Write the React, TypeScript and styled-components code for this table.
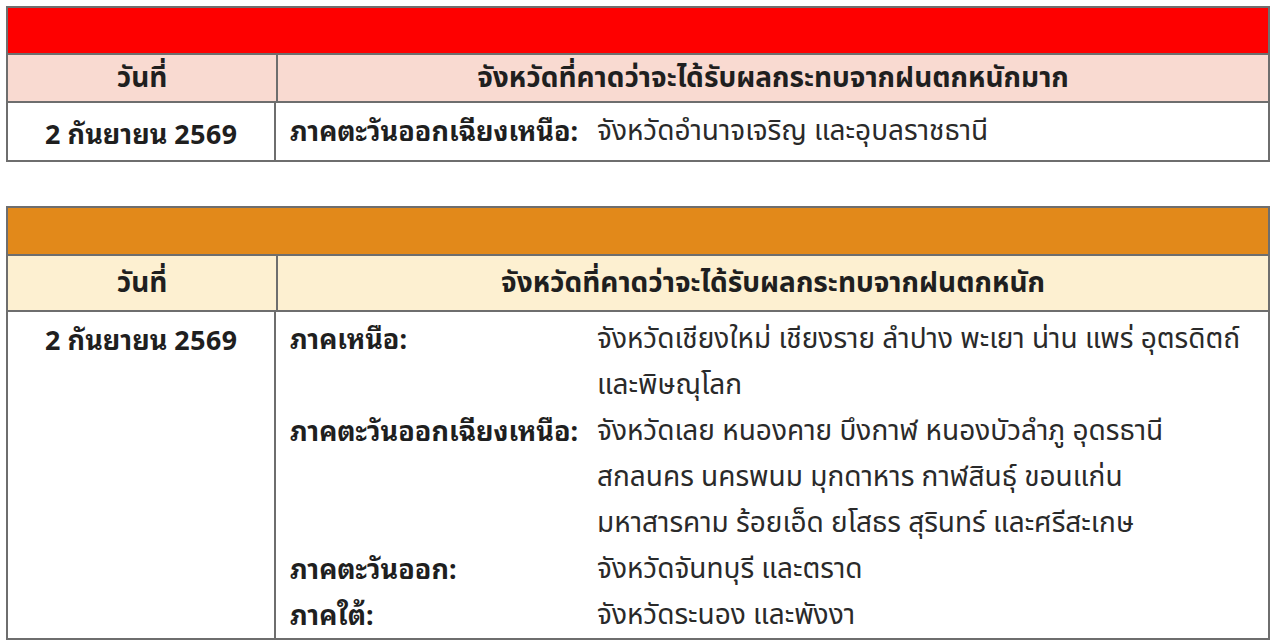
import React from "react"
import styled, { createGlobalStyle } from "styled-components"

const Global = createGlobalStyle`
  html, body {
    margin: 0;
    padding: 0;
    background: #ffffff;
  }
  body {
    font-family: "Noto Sans Thai Looped", "Noto Sans Thai", "Noto Sans", sans-serif;
    color: #1f1f1f;
  }
`

const Page = styled.div`
  display: flex;
  flex-direction: column;
  gap: 44px;
  padding: 6px 10px 0 6px;
  width: 1264px;
`

const Table = styled.div`
  border: 2px solid #6e6e6e;
  display: flex;
  flex-direction: column;
`

const Band = styled.div<{ $color: string; $h: number }>`
  height: ${(p) => p.$h}px;
  background: ${(p) => p.$color};
  border-bottom: 2px solid #6e6e6e;
`

const Row = styled.div<{ $bg?: string; $h?: number }>`
  display: grid;
  grid-template-columns: 268px 1fr;
  background: ${(p) => p.$bg || "#ffffff"};
  ${(p) => (p.$h ? `height: ${p.$h}px;` : "")}
  & + & {
    border-top: 2px solid #6e6e6e;
  }
`

const HeadCell = styled.div`
  display: flex;
  align-items: center;
  justify-content: center;
  font-family: "Noto Sans Thai", "Noto Sans", sans-serif;
  font-weight: 700;
  font-size: 28px;
  & + & {
    border-left: 2px solid #6e6e6e;
  }
`

const DateCell = styled.div<{ $top?: boolean }>`
  display: flex;
  justify-content: center;
  align-items: ${(p) => (p.$top ? "flex-start" : "center")};
  padding-top: ${(p) => (p.$top ? "3px" : "0")};
  font-weight: 700;
  font-size: 27px;
  line-height: 46px;
  border-right: 2px solid #6e6e6e;
`

const Regions = styled.div<{ $top?: boolean }>`
  display: grid;
  grid-template-columns: 307px 1fr;
  align-items: start;
  align-content: ${(p) => (p.$top ? "start" : "center")};
  padding: ${(p) => (p.$top ? "5px 0 0 14px" : "0 0 0 14px")};
  line-height: 46px;
`

const Label = styled.div`
  font-weight: 700;
  font-size: 27px;
  white-space: nowrap;
  margin-top: -3px;
  height: 46px;
`

const Value = styled.div`
  font-family: "Noto Sans Thai", "Noto Sans", sans-serif;
  font-size: 28px;
  white-space: nowrap;
  display: flex;
  flex-direction: column;
  color: #2a2a2a;
`

type Region = { label: string; lines: string[] }

const heavy: Region[] = [
  { label: "ภาคตะวันออกเฉียงเหนือ:", lines: ["จังหวัดอำนาจเจริญ และอุบลราชธานี"] },
]

const rain: Region[] = [
  {
    label: "ภาคเหนือ:",
    lines: ["จังหวัดเชียงใหม่ เชียงราย ลำปาง พะเยา น่าน แพร่ อุตรดิตถ์", "และพิษณุโลก"],
  },
  {
    label: "ภาคตะวันออกเฉียงเหนือ:",
    lines: [
      "จังหวัดเลย หนองคาย บึงกาฬ หนองบัวลำภู อุดรธานี",
      "สกลนคร นครพนม มุกดาหาร กาฬสินธุ์ ขอนแก่น",
      "มหาสารคาม ร้อยเอ็ด ยโสธร สุรินทร์ และศรีสะเกษ",
    ],
  },
  { label: "ภาคตะวันออก:", lines: ["จังหวัดจันทบุรี และตราด"] },
  { label: "ภาคใต้:", lines: ["จังหวัดระนอง และพังงา"] },
]

const RegionList = ({ items, top }: { items: Region[]; top?: boolean }) => (
  <Regions $top={top}>
    {items.map((r) => (
      <React.Fragment key={r.label}>
        <Label>{r.label}</Label>
        <Value>
          {r.lines.map((l) => (
            <span key={l}>{l}</span>
          ))}
        </Value>
      </React.Fragment>
    ))}
  </Regions>
)

const App = () => {
  return (
    <>
      <Global />
      <Page>
        <Table>
          <Band $color="#fe0000" $h={45} />
          <Row $bg="#f9dad1" $h={46}>
            <HeadCell>วันที่</HeadCell>
            <HeadCell>จังหวัดที่คาดว่าจะได้รับผลกระทบจากฝนตกหนักมาก</HeadCell>
          </Row>
          <Row $h={57}>
            <DateCell>2 กันยายน 2569</DateCell>
            <RegionList items={heavy} />
          </Row>
        </Table>

        <Table>
          <Band $color="#e2891a" $h={46} />
          <Row $bg="#fdf0d1" $h={54}>
            <HeadCell>วันที่</HeadCell>
            <HeadCell>จังหวัดที่คาดว่าจะได้รับผลกระทบจากฝนตกหนัก</HeadCell>
          </Row>
          <Row $h={326}>
            <DateCell $top>2 กันยายน 2569</DateCell>
            <RegionList items={rain} top />
          </Row>
        </Table>
      </Page>
    </>
  )
}

export default App
